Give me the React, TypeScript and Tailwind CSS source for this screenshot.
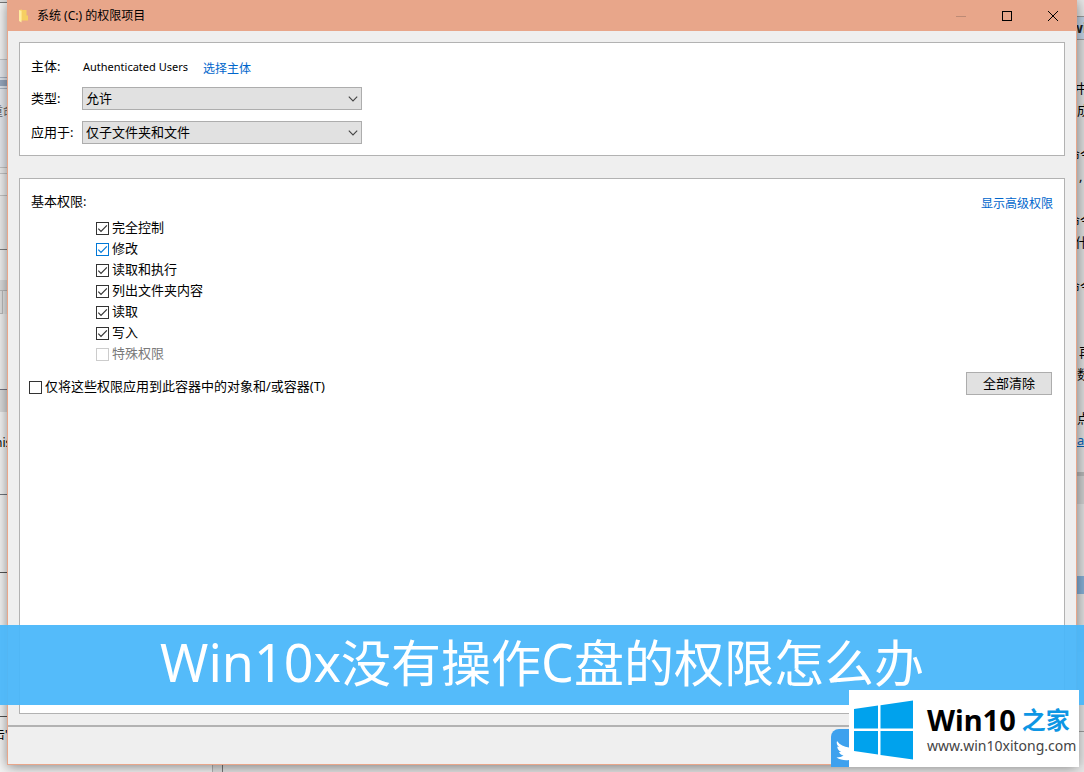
import React from 'react';

interface StripSegment {
    box: string;
    text?: string;
}

// slivers of the windows that sit behind the dialog
const leftSegments: StripSegment[] = [
    { box: 'h-[3px] bg-[#dcdcdc] border-b border-[#777]' },
    { box: 'h-[57px] bg-[#f4f4f4] border-b border-[#c4c6c9]' },
    { box: 'h-[18px] bg-[#e6e9ee] border-b border-[#a9b4c4]' },
    { box: 'h-[2px] bg-[#dfe5ee]' },
    { box: 'h-[6px] bg-[#98a8bf]' },
    { box: 'h-[3px] bg-[#dfe5ee] border-b border-[#a9b4c4]' },
    { box: 'h-[45px] bg-[#e6e9ee] text-[#666] text-xs indent-[-9px]', text: '重命' },
    { box: 'h-[34px] bg-[#e6e9ee] border-b border-[#c4c4c4]' },
    { box: 'h-[6px] bg-[#ececec] border-b border-[#c4c4c4]' },
    { box: 'h-[22px] bg-[#f0f0f0] border-b border-[#c4c4c4]' },
    { box: 'h-[54px] bg-[#ececec] border-b border-[#808080]' },
    { box: 'h-[30px] bg-[#f0f0f0]' },
    { box: 'h-[11px] bg-[#dcdcdc] border-b border-[#bbb]' },
    { box: 'h-[23px] w-[3px] bg-[#e0e0e0] border-r border-b border-[#bbb]' },
    { box: 'h-[76px] bg-[#f0f0f0] border-b border-[#777784]' },
    { box: 'h-[22px] bg-[#dcdcdc]' },
    { box: 'h-[62px] bg-[#f4f4f4] text-black text-xs indent-[-5px]', text: 'his' },
    { box: 'h-[21px] bg-[#f4f4f4] border-b border-[#70757c]' },
    { box: 'h-[78px] bg-[#f4f4f4] border-b border-[#555]' },
    { box: 'h-[144px] bg-[#f4f4f4] border-b border-[#555]' },
    { box: 'h-[35px] bg-[#f4f4f4] text-black text-xs indent-[-7px]', text: '击"' },
    { box: 'flex-1 bg-[#f4f4f4]' },
];

const rightSegments: StripSegment[] = [
    { box: 'h-[17px] bg-[#e6e6e6] border-b border-[#999]' },
    { box: 'h-[23px] bg-[#bfd0e2] border-b border-[#999] text-[#222] text-sm font-bold indent-[-6px]', text: 'wi' },
    { box: 'h-[37px] bg-[#dcdcdc]' },
    { box: 'h-[22px] bg-[#dcdcdc] indent-[-2px]', text: '中' },
    { box: 'h-[22px] bg-[#dcdcdc]', text: '成' },
    { box: 'h-[22px] bg-[#dcdcdc]' },
    { box: 'h-[22px] bg-[#dcdcdc] indent-[-10px]', text: '命令' },
    { box: 'h-[22px] bg-[#dcdcdc] indent-[2px]', text: ',' },
    { box: 'h-[22px] bg-[#dcdcdc]' },
    { box: 'h-[22px] bg-[#dcdcdc] indent-[-10px]', text: '命令' },
    { box: 'h-[22px] bg-[#dcdcdc] indent-[-2px]', text: '什' },
    { box: 'h-[22px] bg-[#dcdcdc]' },
    { box: 'h-[22px] bg-[#dcdcdc] indent-[-10px]', text: '命令' },
    { box: 'h-[44px] bg-[#dcdcdc]' },
    { box: 'h-[22px] bg-[#dcdcdc] indent-[2px]', text: '再' },
    { box: 'h-[22px] bg-[#dcdcdc]', text: '数' },
    { box: 'h-[22px] bg-[#dcdcdc]' },
    { box: 'h-[22px] bg-[#dcdcdc]', text: '点' },
    { box: 'h-[22px] bg-[#dcdcdc] text-[#0a62b4] underline', text: 'ae' },
    { box: 'h-[21px] bg-[#dcdcdc]' },
    { box: 'h-[4px] bg-[#b4b4b4]' },
    { box: 'h-[28px] bg-[#cdcdcd]' },
    { box: 'h-[72px] bg-[#dedede]' },
    { box: 'h-[18px] bg-[#84add3]' },
    { box: 'h-[35px] bg-[#dedede]' },
    { box: 'h-[23px] bg-[#c6cdd6]' },
    { box: 'h-[24px] bg-[#dedede]' },
    { box: 'h-[56px] bg-[#dedede] border-b border-[#999]' },
    { box: 'flex-1 bg-[#e4e4e4]' },
];

const permissions = [
    { id: 'full', label: '完全控制', checked: true },
    { id: 'modify', label: '修改', checked: true, focused: true },
    { id: 'read-exec', label: '读取和执行', checked: true },
    { id: 'list', label: '列出文件夹内容', checked: true },
    { id: 'read', label: '读取', checked: true },
    { id: 'write', label: '写入', checked: true },
    { id: 'special', label: '特殊权限', checked: false, disabled: true },
];

const Strip: React.FC<{ segments: StripSegment[] }> = ({ segments }) => (
    <div className="w-[7px] shrink-0 flex flex-col text-[13px]" aria-hidden="true">
        {segments.map((s, i) => (
            <div key={i} className={`flex items-center overflow-hidden whitespace-nowrap leading-none ${s.box}`}>{s.text}</div>
        ))}
    </div>
);

interface CheckProps {
    id: string;
    label: string;
    checked: boolean;
    focused?: boolean;
    disabled?: boolean;
}

const Check: React.FC<CheckProps> = ({ id, label, checked, focused, disabled }) => (
    <label htmlFor={id} className={`flex items-center gap-[3px] ${disabled ? 'text-[#7a7a7a]' : 'text-black'}`}>
        <span className="grid shrink-0">
            <input
                id={id}
                type="checkbox"
                defaultChecked={checked}
                disabled={disabled}
                className={`peer col-start-1 row-start-1 appearance-none size-[13px] border bg-white ${focused ? 'border-[#0078d7]' : disabled ? 'border-[#cccccc]' : 'border-[#333333]'}`}
            />
            <svg viewBox="0 0 13 13" className={`col-start-1 row-start-1 size-[13px] pointer-events-none invisible peer-checked:visible ${focused ? 'text-[#0078d7]' : 'text-[#333333]'}`}>
                <path d="M2.3 6.6 L5 9.3 L10.9 3.3" fill="none" stroke="currentColor" strokeWidth="1.2" />
            </svg>
        </span>
        <span className="pb-[3px] leading-4">{label}</span>
    </label>
);

const SelectRow: React.FC<{ id: string; label: string; value: string }> = ({ id, label, value }) => (
    <div className="flex items-center">
        <label htmlFor={id} className="w-[51px] shrink-0">{label}</label>
        <div className="grid w-[280px]">
            <select id={id} className="col-start-1 row-start-1 appearance-none h-[23px] border border-[#adadad] bg-[#e1e1e1] px-[3px] pb-0.5 leading-4 text-black">
                <option>{value}</option>
            </select>
            <svg viewBox="0 0 10 6" className="col-start-1 row-start-1 self-center justify-self-end mr-1 w-[10px] h-[6px] pointer-events-none">
                <path d="M0.8 0.7 L5 4.9 L9.2 0.7" fill="none" stroke="#444" strokeWidth="1.1" />
            </svg>
        </div>
    </div>
);

const TitleBar: React.FC = () => (
    <header className="flex h-[31px] items-center bg-[#e8a68a]">
        <svg viewBox="0 0 12 14" className="ml-2.5 w-3 h-3.5 shrink-0">
            <path d="M1 1 L4 0.5 V11.5 H1 Z" fill="#fbd568" />
            <path d="M4 1 H8.5 V6.5 H10 V11.5 H4 Z" fill="#f6cf62" />
            <path d="M1 1 L3.5 2 V13.5 L1 12 Z" fill="#ffec9f" />
        </svg>
        <h1 className="ml-[7px] flex-1 text-xs text-black">系统 (C:) 的权限项目</h1>
        <button aria-label="最小化" className="w-[46px] h-full flex items-center justify-center">
            <svg viewBox="0 0 10 10" className="size-[10px]"><path d="M0 5.5 H10" stroke="#bd8a75" /></svg>
        </button>
        <button aria-label="最大化" className="w-[46px] h-full flex items-center justify-center">
            <svg viewBox="0 0 10 10" className="size-[10px]"><rect x="0.5" y="0.5" width="9" height="9" fill="none" stroke="#000" /></svg>
        </button>
        <button aria-label="关闭" className="w-[46px] h-full flex items-center justify-center">
            <svg viewBox="0 0 10 10" className="size-[10px]"><path d="M0 0 L10 10 M10 0 L0 10" stroke="#000" /></svg>
        </button>
    </header>
);

const Watermark: React.FC = () => (
    <div className="absolute right-[5px] bottom-[5px] z-30 flex items-end">
        <div className="w-[18px] h-[38px] rounded-tl-lg bg-[#3ea1ee] overflow-hidden">
            <svg viewBox="0 0 18 38" className="w-[18px] h-[38px]">
                <path d="M6 12 C9 16 13 18 18 18.500 V31 C14 31.500 9 31 5.500 28.500 C8.500 28.500 11 27.800 12.500 26.500 C10 26.200 8.800 24.800 8 23 H10.200 C7.800 22 6.300 20 6.200 17.600 L8.300 18.200 C6 16.300 5.200 14.500 6 12 Z" fill="#fff" />
            </svg>
        </div>
        <div className="flex items-center w-[230px] h-[77px] bg-white pl-[5px] pt-[3px]">
            <svg viewBox="0 0 60 60" className="size-[60px] shrink-0" fill="#00a2ed">
                <path d="M0 9 L24 5.500 V28.500 H0 Z" />
                <path d="M26.500 5.200 L59 0.500 V28.500 H26.500 Z" />
                <path d="M0 31 H24 V54.500 L0 51 Z" />
                <path d="M26.500 31 H59 V59.500 L26.500 55 Z" />
            </svg>
            <div className="ml-[13px] whitespace-nowrap">
                <div className="flex items-center gap-1.5 h-8 font-bold">
                    <span className="text-[29px] leading-8 text-black">Win10</span>
                    <span className="text-2xl leading-8 text-[#0d96e4]">之家</span>
                </div>
                <div className="text-sm leading-5 text-[#444]">www.win10xitong.com</div>
            </div>
        </div>
    </div>
);

const App: React.FC = () => (
    <div className="relative min-h-screen flex flex-col overflow-hidden bg-[#e6e6e6] text-[13px] text-black font-['Noto_Sans','Noto_Sans_CJK_SC',sans-serif]">
        <div className="flex-1 flex">
            <Strip segments={leftSegments} />

            <main className="relative z-10 flex-1 min-w-0 flex flex-col border-x border-b border-[#e8a68a] bg-[#efefef] shadow-[0_2px_12px_rgba(0,0,0,0.45)]">
                <TitleBar />

                <div className="flex-1 flex flex-col gap-[22px] px-[11px] pt-[11px] pb-[11px]">
                    <section className="border border-[#b2b2b2] bg-white px-[11px] pt-3 pb-[11px]">
                        <div className="flex items-center h-6">
                            <span className="w-[52px]">主体:</span>
                            <span className="w-[120px] text-[11px] whitespace-nowrap">Authenticated Users</span>
                            <a href="#principal" className="pt-[3px] text-xs text-[#0066cc]">选择主体</a>
                        </div>
                        <div className="mt-2 flex flex-col gap-[11px]">
                            <SelectRow id="type" label="类型:" value="允许" />
                            <SelectRow id="applies-to" label="应用于:" value="仅子文件夹和文件" />
                        </div>
                    </section>

                    <section className="flex-1 border border-[#b2b2b2] bg-white px-[11px] pt-[11px]">
                        <div className="flex items-center justify-between h-6">
                            <h2>基本权限:</h2>
                            <a href="#advanced" className="pt-[3px] text-xs text-[#0066cc]">显示高级权限</a>
                        </div>
                        <ul className="mt-1 ml-[65px]">
                            {permissions.map((p) => (
                                <li key={p.id} className="flex items-center h-[21px]"><Check {...p} /></li>
                            ))}
                        </ul>
                        <div className="mt-[7px] flex items-start justify-between -ml-0.5">
                            <div className="pt-1.5">
                                <Check id="container-only" label="仅将这些权限应用到此容器中的对象和/或容器(T)" checked={false} />
                            </div>
                            <button className="w-[86px] h-[23px] mr-px border border-[#adadad] bg-[#e1e1e1] pb-0.5 leading-4">全部清除</button>
                        </div>
                    </section>
                </div>

                <footer className="h-[39px] border-t-2 border-[#b2b2b2]" />
            </main>

            <Strip segments={rightSegments} />
        </div>

        <div className="flex h-[7px]" aria-hidden="true">
            <div className="w-[213px] border-r border-[#b5b5b5] bg-[#f4f4f4]" />
            <div className="w-[10px] border-r border-[#777] bg-[#e4e4e4]" />
            <div className="flex-1 bg-[#e6e6e6]" />
        </div>

        <div className="absolute inset-x-0 bottom-[67px] z-20 h-20 pb-1.5 flex items-center justify-center bg-[#49b7fa]/94 text-white text-[50px] leading-none whitespace-nowrap">
            <p><span className="text-[52px]">Win10x</span>没有操作<span className="text-[52px]">C</span>盘的权限怎么办</p>
        </div>

        <Watermark />
    </div>
);

export default App;
